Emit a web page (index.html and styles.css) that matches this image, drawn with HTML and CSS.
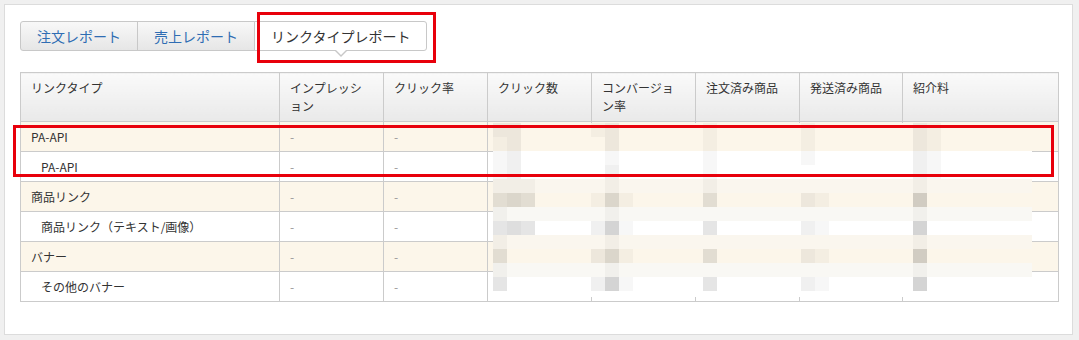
FILE: index.html
```html
<!DOCTYPE html>
<html lang="ja">
<head>
    <meta charset="UTF-8">
    <meta name="viewport" content="width=device-width, initial-scale=1.0">
    <title>リンクタイプレポート</title>
    <link rel="stylesheet" href="styles.css">
</head>
<body>

    <div class="panel">
        <ul class="tabs">
            <li><a href="#">注文レポート</a></li>
            <li><a href="#">売上レポート</a></li>
            <li class="active"><a href="#">リンクタイプレポート</a></li>
        </ul>

        <div class="report">
            <table class="report-table">
                <colgroup>
                    <col class="w-type">
                    <col class="w-num"><col class="w-num"><col class="w-num">
                    <col class="w-num"><col class="w-num"><col class="w-num2">
                    <col class="w-fee">
                </colgroup>
                <thead>
                    <tr>
                        <th>リンクタイプ</th>
                        <th>インプレッション</th>
                        <th>クリック率</th>
                        <th>クリック数</th>
                        <th>コンバージョン率</th>
                        <th>注文済み商品</th>
                        <th>発送済み商品</th>
                        <th>紹介料</th>
                    </tr>
                </thead>
                <tbody>
                    <tr class="group">
                        <td>PA-API</td><td class="dash">-</td><td class="dash">-</td>
                        <td></td><td></td><td></td><td></td><td></td>
                    </tr>
                    <tr class="child">
                        <td>PA-API</td><td class="dash">-</td><td class="dash">-</td>
                        <td></td><td></td><td></td><td></td><td></td>
                    </tr>
                    <tr class="group">
                        <td>商品リンク</td><td class="dash">-</td><td class="dash">-</td>
                        <td></td><td></td><td></td><td></td><td></td>
                    </tr>
                    <tr class="child">
                        <td>商品リンク（テキスト/画像）</td><td class="dash">-</td><td class="dash">-</td>
                        <td></td><td></td><td></td><td></td><td></td>
                    </tr>
                    <tr class="group">
                        <td>バナー</td><td class="dash">-</td><td class="dash">-</td>
                        <td></td><td></td><td></td><td></td><td></td>
                    </tr>
                    <tr class="child">
                        <td>その他のバナー</td><td class="dash">-</td><td class="dash">-</td>
                        <td></td><td></td><td></td><td></td><td></td>
                    </tr>
                </tbody>
            </table>

            <!-- figures are masked with a pixel mosaic -->
            <div class="mosaic">
                <div class="band cream"><i class="x0 t2"></i><i class="x1 t2"></i><i class="x7 t1"></i><i class="x8 t2"></i><i class="x15 t1"></i><i class="x22 t1"></i><i class="x30 t2"></i><i class="x31 t1"></i></div>
                <div class="band cream"><i class="x0 t1"></i><i class="x1 t2"></i><i class="x8 t2"></i><i class="x15 t1"></i><i class="x22 t1"></i><i class="x30 t2"></i><i class="x31 t1"></i></div>
                <div class="band white"><i class="x0 t1"></i><i class="x1 t2"></i><i class="x8 t1"></i><i class="x15 t1"></i><i class="x22 t1"></i><i class="x30 t2"></i><i class="x31 t1"></i></div>
                <div class="band white"><i class="x0 t1"></i><i class="x1 t2"></i><i class="x8 t2"></i><i class="x15 t1"></i><i class="x30 t2"></i><i class="x31 t1"></i></div>
                <div class="band mix-c"><i class="x0 t1"></i><i class="x1 t1"></i><i class="x2 t1"></i><i class="x8 t1"></i><i class="x15 t1"></i><i class="x30 t1"></i></div>
                <div class="band cream"><i class="x0 t3"></i><i class="x1 t4"></i><i class="x2 t3"></i><i class="x7 t1"></i><i class="x8 t4"></i><i class="x9 t1"></i><i class="x15 t3"></i><i class="x22 t2"></i><i class="x23 t1"></i><i class="x30 t5"></i></div>
                <div class="band mix"><i class="x0 t1"></i><i class="x8 t1"></i><i class="x30 t1"></i></div>
                <div class="band white"><i class="x0 t3"></i><i class="x1 t4"></i><i class="x2 t3"></i><i class="x7 t2"></i><i class="x8 t5"></i><i class="x9 t1"></i><i class="x15 t3"></i><i class="x22 t2"></i><i class="x23 t1"></i><i class="x30 t5"></i></div>
                <div class="band mix-c"><i class="x0 t1"></i><i class="x8 t1"></i><i class="x30 t1"></i></div>
                <div class="band cream"><i class="x0 t3"></i><i class="x7 t2"></i><i class="x8 t4"></i><i class="x9 t1"></i><i class="x15 t3"></i><i class="x22 t2"></i><i class="x23 t1"></i><i class="x30 t5"></i></div>
                <div class="band mix"><i class="x0 t1"></i><i class="x8 t1"></i><i class="x30 t1"></i></div>
                <div class="band white"><i class="x0 t3"></i><i class="x7 t2"></i><i class="x8 t5"></i><i class="x9 t1"></i><i class="x15 t3"></i><i class="x22 t2"></i><i class="x23 t1"></i><i class="x30 t5"></i></div>
                <div class="band white short"></div>
            </div>
        </div>
    </div>

    <div class="mark mark-tab"></div>
    <div class="mark mark-rows"></div>

</body>
</html>
```

FILE: styles.css
```css
body {
    margin: 0;
    background: #f0f0f0;
    font-family: "Noto Sans CJK JP", "Liberation Sans", sans-serif;
    color: #333;
}

.panel {
    margin: 4px 6px 0 4px;
    padding: 16px 14px 32px 15px;
    background: #fff;
    border: 1px solid #dcdcdc;
}

/* tabs */
.tabs {
    display: flex;
    list-style: none;
    margin: 0 0 21px;
    padding: 0;
}

.tabs li {
    position: relative;
}

.tabs li + li {
    margin-left: -1px;
}

.tabs a {
    display: block;
    height: 28px;
    line-height: 28px;
    padding: 0 16px;
    font-size: 14px;
    color: #2f6db3;
    text-decoration: none;
    background: linear-gradient(#f8f8f8, #e6e6e6);
    border: 1px solid #c8c8c8;
}

.tabs li:first-child a {
    border-radius: 3px 0 0 3px;
}

.tabs li:last-child a {
    border-radius: 0 3px 3px 0;
}

.tabs .active a {
    background: #fff;
    color: #333;
}

.tabs .active::before,
.tabs .active::after {
    content: "";
    position: absolute;
    left: 50%;
    width: 0;
    height: 0;
    border-style: solid;
    border-color: transparent;
}

.tabs .active::before {
    top: 100%;
    margin-left: -6px;
    border-width: 6px 6px 0;
    border-top-color: #c8c8c8;
}

.tabs .active::after {
    top: calc(100% - 1px);
    margin-left: -5px;
    border-width: 5px 5px 0;
    border-top-color: #fff;
}

/* report table */
.report {
    position: relative;
}

.report-table {
    width: 1038px;
    table-layout: fixed;
    border-collapse: collapse;
    font-size: 12px;
    line-break: loose;
}

.w-type { width: 259px; }
.w-num { width: 104px; }
.w-num2 { width: 103px; }
.w-fee { width: 156px; }

.report-table th,
.report-table td {
    border: 1px solid #cbcbcb;
}

.report-table th {
    height: 36px;
    padding: 6px 14px 6px 10px;
    line-height: 18px;
    text-align: left;
    vertical-align: top;
    font-weight: normal;
    background: linear-gradient(#fafafa, #e9e9e9);
}

.report-table td {
    height: 29px;
    padding: 0 10px;
    line-height: 18px;
}

.report-table .group td {
    background: #fcf6ea;
}

.report-table .child td:first-child {
    padding-left: 20px;
}

.report-table .dash {
    color: #999;
}

/* mosaic over the figures */
.mosaic {
    position: absolute;
    left: 473px;
    top: 51px;
    width: 539px;
    height: 174px;
    overflow: hidden;
}

.band {
    display: grid;
    grid-template-columns: repeat(39, 14px);
    height: 14px;
}

.band.short { height: 6px; }
.band.cream { background: #fcf6ea; }
.band.white { background: #fff; }
.band.mix { background: #f9f8f4; }
.band.mix-c { background: #faf6ee; }

.band i {
    grid-row: 1;
    height: 14px;
}

.x0 { grid-column: 1; }
.x1 { grid-column: 2; }
.x2 { grid-column: 3; }
.x7 { grid-column: 8; }
.x8 { grid-column: 9; }
.x9 { grid-column: 10; }
.x15 { grid-column: 16; }
.x22 { grid-column: 23; }
.x23 { grid-column: 24; }
.x30 { grid-column: 31; }
.x31 { grid-column: 32; }

.t1 { background: rgba(0, 0, 0, 0.03); }
.t2 { background: rgba(0, 0, 0, 0.06); }
.t3 { background: rgba(0, 0, 0, 0.1); }
.t4 { background: rgba(0, 0, 0, 0.13); }
.t5 { background: rgba(0, 0, 0, 0.17); }

/* red highlight frames */
.mark {
    position: absolute;
    border: 3px solid #e8000b;
}

.mark-tab {
    left: 257px;
    top: 12px;
    width: 173px;
    height: 45px;
}

.mark-rows {
    left: 13px;
    top: 125px;
    width: 1035px;
    height: 46px;
}
```
